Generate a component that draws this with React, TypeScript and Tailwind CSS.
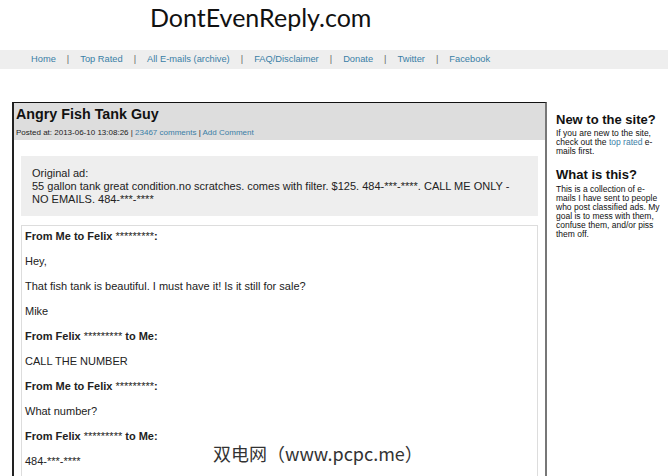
import React from 'react'

const navLinks = ['Home', 'Top Rated', 'All E-mails (archive)', 'FAQ/Disclaimer', 'Donate', 'Twitter', 'Facebook']

type Msg = { from?: [string, string, string]; text?: string }

const thread: Msg[] = [
  { from: ['From Me to Felix', ' *********', ':'] },
  { text: 'Hey,' },
  { text: 'That fish tank is beautiful. I must have it! Is it still for sale?' },
  { text: 'Mike' },
  { from: ['From Felix', ' ********* ', 'to Me:'] },
  { text: 'CALL THE NUMBER' },
  { from: ['From Me to Felix', ' *********', ':'] },
  { text: 'What number?' },
  { from: ['From Felix', ' ********* ', 'to Me:'] },
  { text: '484-***-****' },
]

export default function App() {
  return (
    <div className="relative h-[476px] w-[670px] overflow-hidden bg-white font-['Liberation_Sans',Arial,sans-serif] text-[#222]">
      {/* site title */}
      <header className="h-[50px] pl-[150px] pt-[2px]">
        <h1 className="font-['Lato',sans-serif] text-[25px] leading-[30px] text-[#111]">DontEvenReply.com</h1>
      </header>

      {/* nav strip */}
      <nav className="flex h-[19px] w-[668px] items-center gap-[11px] bg-[#eeeeee] pl-[31px] text-[9.3px] text-[#3a7ea6]">
        {navLinks.map((l, i) => (
          <React.Fragment key={l}>
            {i > 0 && <span className="text-[#666]">|</span>}
            <a href="#">{l}</a>
          </React.Fragment>
        ))}
      </nav>

      <div className="mt-[33px] flex items-start pl-[12px]">
        <main className="w-[535px] border-t border-l-2 border-r-2 border-t-[#111] border-l-[#222] border-r-[#777] pb-[40px]">
          <div className="bg-[#dddddd] px-[2px] pb-[2px] pt-[1px]">
            <h2 className="text-[14.3px] font-bold leading-[20px] text-[#111]">Angry Fish Tank Guy</h2>
            <p className="mt-[4px] text-[8px] leading-[10px]">
              Posted at: 2013-06-10 13:08:26 | <a href="#" className="text-[#3a7ea6]">23467 comments</a> |{' '}
              <a href="#" className="text-[#3a7ea6]">Add Comment</a>
            </p>
          </div>

          <div className="mx-[7px] mt-[16px] bg-[#eeeeee] pb-[10px] pl-[11px] pr-[20px] pt-[11px] text-[11px] leading-[13px]">
            <p>Original ad:</p>
            <p>55 gallon tank great condition.no scratches. comes with filter. $125. 484-***-****. CALL ME ONLY - NO EMAILS. 484-***-****</p>
          </div>

          <div className="mx-[7px] mt-[9px] border border-[#dddddd] px-[3px] pb-[30px] pt-[3px] text-[11px] leading-[14px]">
            {thread.map((m, i) => (
              <p key={i} className="mb-[11px]">
                {m.from ? (
                  <>
                    <b>{m.from[0]}</b>
                    <span>{m.from[1]}</span>
                    <b>{m.from[2]}</b>
                  </>
                ) : (
                  m.text
                )}
              </p>
            ))}
          </div>
        </main>

        {/* sidebar */}
        <aside className="ml-[9px] w-[108px] text-[#111]">
          <h3 className="mt-[10px] text-[13px] font-bold leading-[16px]">New to the site?</h3>
          <p className="mt-[1px] text-[8.5px] leading-[9px]">
            If you are new to the site, check out the <a href="#" className="text-[#3a7ea6]">top rated</a> e-mails first.
          </p>
          <h3 className="mt-[11px] text-[13px] font-bold leading-[16px]">What is this?</h3>
          <p className="mt-[2px] text-[8.5px] leading-[9px]">
            This is a collection of e-mails I have sent to people who post classified ads. My goal is to mess with them, confuse them, and/or piss them off.
          </p>
        </aside>
      </div>

      {/* watermark over the page */}
      <div className="absolute left-[213px] top-[441px] font-['Noto_Sans_CJK_SC',sans-serif] text-[18px] leading-[24px] text-[#333]">
        双电网（www.pcpc.me）
      </div>
    </div>
  )
}
